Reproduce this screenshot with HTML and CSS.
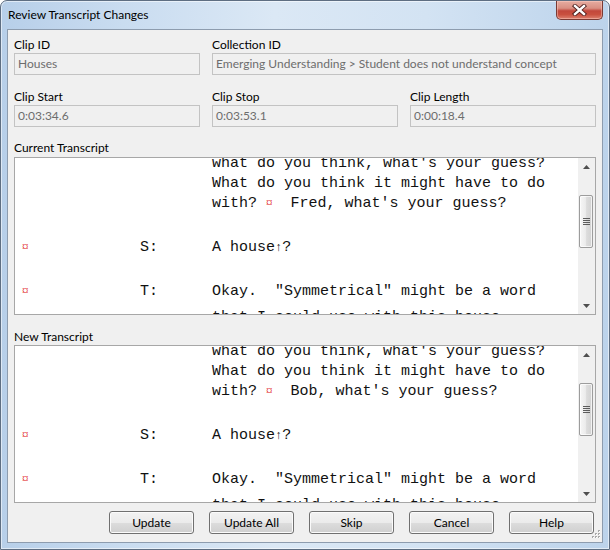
FILE: index.html
```html
<!DOCTYPE html>
<html>
<head>
<meta charset="utf-8">
<title>Review Transcript Changes</title>
<link rel="stylesheet" href="styles.css">
</head>
<body>
<div class="window">
  <div class="titlebar">
    <span class="title">Review Transcript Changes</span>
    <div class="close">
      <svg width="15" height="12" viewBox="0 0 15 12">
        <path d="M3 2 L12 10 M12 2 L3 10" stroke="#4a1c1a" stroke-width="4.2" stroke-linecap="square"/>
        <path d="M3 2 L12 10 M12 2 L3 10" stroke="#ffffff" stroke-width="2.4" stroke-linecap="square"/>
      </svg>
    </div>
  </div>
  <div class="client">
    <div class="fields">
      <div class="field">
        <div class="label">Clip ID</div>
        <div class="input">Houses</div>
      </div>
      <div class="field span2">
        <div class="label">Collection ID</div>
        <div class="input">Emerging Understanding &gt; Student does not understand concept</div>
      </div>
      <div class="field">
        <div class="label">Clip Start</div>
        <div class="input">0:03:34.6</div>
      </div>
      <div class="field">
        <div class="label">Clip Stop</div>
        <div class="input">0:03:53.1</div>
      </div>
      <div class="field">
        <div class="label">Clip Length</div>
        <div class="input">0:00:18.4</div>
      </div>
    </div>

    <div class="tlabel">Current Transcript</div>
    <div class="tbox">
      <div class="tview">
        <div class="tcontent">
          <div class="para"><div class="mark"></div><div class="spk"></div><div class="txt">what do you think, what's your guess?<br>What do you think it might have to do<br>with? <span class="sym">¤</span>  Fred, what's your guess?</div></div>
          <div class="para"><div class="mark"><span class="sym">¤</span></div><div class="spk">S:</div><div class="txt">A house<span class="arrow">↑</span>?</div></div>
          <div class="para"><div class="mark"><span class="sym">¤</span></div><div class="spk">T:</div><div class="txt">Okay.  "Symmetrical" might be a word<div class="nextline">that I could use with this house. <span class="sym">¤</span></div></div></div>
        </div>
      </div>
      <div class="sb">
        <div class="sb-btn"><svg width="7" height="4" viewBox="0 0 7 4"><path d="M0 4 L3.5 0 L7 4 Z" fill="#4e4e4e"/></svg></div>
        <div class="sb-track">
          <div class="thumb"><svg width="7" height="7" viewBox="0 0 7 7"><path d="M0 0.5 H7 M0 2.5 H7 M0 4.5 H7 M0 6.5 H7" stroke="#5c5c5c" stroke-width="1"/></svg></div>
        </div>
        <div class="sb-btn"><svg width="7" height="4" viewBox="0 0 7 4"><path d="M0 0 L3.5 4 L7 0 Z" fill="#4e4e4e"/></svg></div>
      </div>
    </div>

    <div class="tlabel second">New Transcript</div>
    <div class="tbox tight">
      <div class="tview">
        <div class="tcontent">
          <div class="para"><div class="mark"></div><div class="spk"></div><div class="txt">what do you think, what's your guess?<br>What do you think it might have to do<br>with? <span class="sym">¤</span>  Bob, what's your guess?</div></div>
          <div class="para"><div class="mark"><span class="sym">¤</span></div><div class="spk">S:</div><div class="txt">A house<span class="arrow">↑</span>?</div></div>
          <div class="para"><div class="mark"><span class="sym">¤</span></div><div class="spk">T:</div><div class="txt">Okay.  "Symmetrical" might be a word<div class="nextline">that I could use with this house. <span class="sym">¤</span></div></div></div>
        </div>
      </div>
      <div class="sb">
        <div class="sb-btn"><svg width="7" height="4" viewBox="0 0 7 4"><path d="M0 4 L3.5 0 L7 4 Z" fill="#4e4e4e"/></svg></div>
        <div class="sb-track">
          <div class="thumb"><svg width="7" height="7" viewBox="0 0 7 7"><path d="M0 0.5 H7 M0 2.5 H7 M0 4.5 H7 M0 6.5 H7" stroke="#5c5c5c" stroke-width="1"/></svg></div>
        </div>
        <div class="sb-btn"><svg width="7" height="4" viewBox="0 0 7 4"><path d="M0 0 L3.5 4 L7 0 Z" fill="#4e4e4e"/></svg></div>
      </div>
    </div>

    <div class="buttons">
      <button class="btn">Update</button>
      <button class="btn">Update All</button>
      <button class="btn">Skip</button>
      <button class="btn">Cancel</button>
      <button class="btn">Help</button>
    </div>

    <svg class="grip" width="11" height="11" viewBox="0 0 11 11">
      <g fill="#a8a8a8">
        <rect x="8" y="0" width="2" height="2"/>
        <rect x="5" y="3" width="2" height="2"/><rect x="8" y="3" width="2" height="2"/>
        <rect x="2" y="6" width="2" height="2"/><rect x="5" y="6" width="2" height="2"/><rect x="8" y="6" width="2" height="2"/>
      </g>
      <g fill="#ffffff">
        <rect x="9" y="1" width="1" height="1"/>
        <rect x="6" y="4" width="1" height="1"/><rect x="9" y="4" width="1" height="1"/>
        <rect x="3" y="7" width="1" height="1"/><rect x="6" y="7" width="1" height="1"/><rect x="9" y="7" width="1" height="1"/>
      </g>
    </svg>
  </div>
</div>
</body>
</html>
```

FILE: styles.css
```css
* {
  box-sizing: border-box;
}

html, body {
  margin: 0;
  padding: 0;
}

body {
  width: 610px;
  height: 550px;
  overflow: hidden;
  background: #ffffff;
  font-family: Lato, "Noto Sans", sans-serif;
  font-size: 12px;
  color: #000000;
}

.window {
  width: 610px;
  height: 550px;
  border: 1px solid #5e6e82;
  border-radius: 7px 7px 0 0;
  background: linear-gradient(to right, #b7cfe9 0%, #c9dcf0 20%, #dbe8f5 45%, #d3e3f3 70%, #bcd3eb 100%);
  box-shadow: inset 0 0 0 1px rgba(255, 255, 255, 0.55);
  display: flex;
  flex-direction: column;
  padding: 0 6px 6px 6px;
}

.titlebar {
  height: 28px;
  display: flex;
  justify-content: space-between;
  align-items: flex-start;
  flex: none;
}

.title {
  line-height: 28px;
  padding-left: 1px;
  color: #000000;
}

.close {
  width: 47px;
  height: 19px;
  border: 1px solid #7a3a34;
  border-top: none;
  border-radius: 0 0 5px 5px;
  background: linear-gradient(#e6aca1 0%, #d98f82 40%, #c2473b 55%, #c9503f 75%, #dc806f 100%);
  box-shadow: inset 0 0 0 1px rgba(255, 210, 200, 0.45);
  display: flex;
  align-items: center;
  justify-content: center;
}

.client {
  position: relative;
  flex: 1;
  border: 1px solid #8d9cae;
  background: #f0f0f0;
  padding: 7px 6px 8px 6px;
  display: flex;
  flex-direction: column;
}

.fields {
  display: grid;
  grid-template-columns: 186px 186px 186px;
  column-gap: 12px;
  row-gap: 14px;
}

.span2 {
  grid-column: span 2;
}

.label {
  line-height: 15px;
  height: 15px;
  margin-bottom: 1px;
}

.input {
  height: 22px;
  border: 1px solid #c3c3c3;
  background: #f0f0f0;
  color: #6d6d6d;
  line-height: 20px;
  padding-left: 3px;
  white-space: nowrap;
  overflow: hidden;
}

.tlabel {
  line-height: 15px;
  height: 15px;
  margin-top: 13px;
  margin-bottom: 2px;
}

.tlabel.second {
  margin-top: 14px;
  margin-bottom: 1px;
}

.tbox {
  height: 158px;
  border: 1px solid #a7a7a7;
  background: #ffffff;
  display: flex;
  flex: none;
}

.tview {
  flex: 1;
  overflow: hidden;
}

.tcontent {
  margin-top: -4px;
  padding-left: 7px;
  font-family: "Liberation Mono", "DejaVu Sans Mono", monospace;
  font-size: 15px;
  line-height: 20px;
  color: #111111;
}

.para {
  display: grid;
  grid-template-columns: 118px 72px 1fr;
  margin-bottom: 24px;
  white-space: pre;
}

.nextline {
  margin-top: 6px;
}

.sym {
  color: #e01010;
  font-family: "Liberation Serif", serif;
  font-size: 13px;
  line-height: 1;
}

.arrow {
  font-size: 12px;
  font-weight: bold;
  line-height: 1;
}

.sb {
  width: 17px;
  flex: none;
  background: #f0f0f0;
  display: flex;
  flex-direction: column;
}

.sb-btn {
  height: 17px;
  display: flex;
  align-items: center;
  justify-content: center;
  flex: none;
}

.sb-track {
  flex: 1;
  padding-top: 20px;
}

.thumb {
  width: 14px;
  height: 53px;
  margin-left: 1px;
  border: 1px solid #9c9c9c;
  border-radius: 2px;
  background: linear-gradient(to right, #f6f6f6 0%, #ececec 45%, #dcdcdc 55%, #d2d2d2 100%);
  box-shadow: inset 0 0 0 1px rgba(255, 255, 255, 0.7);
  display: flex;
  align-items: center;
  justify-content: center;
}

.buttons {
  margin-top: 8px;
  margin-right: 2px;
  display: flex;
  justify-content: flex-end;
  gap: 15px;
}

.btn {
  width: 85px;
  height: 23px;
  padding: 0;
  margin: 0;
  border: 1px solid #707070;
  border-radius: 3px;
  background: linear-gradient(#f2f2f2 0%, #ebebeb 50%, #dddddd 51%, #cfcfcf 100%);
  box-shadow: inset 0 0 0 1px #fbfbfb;
  font-family: Lato, "Noto Sans", sans-serif;
  font-size: 12px;
  color: #000000;
  display: flex;
  align-items: center;
  justify-content: center;
}

.grip {
  position: absolute;
  right: 1px;
  bottom: 1px;
}
```
